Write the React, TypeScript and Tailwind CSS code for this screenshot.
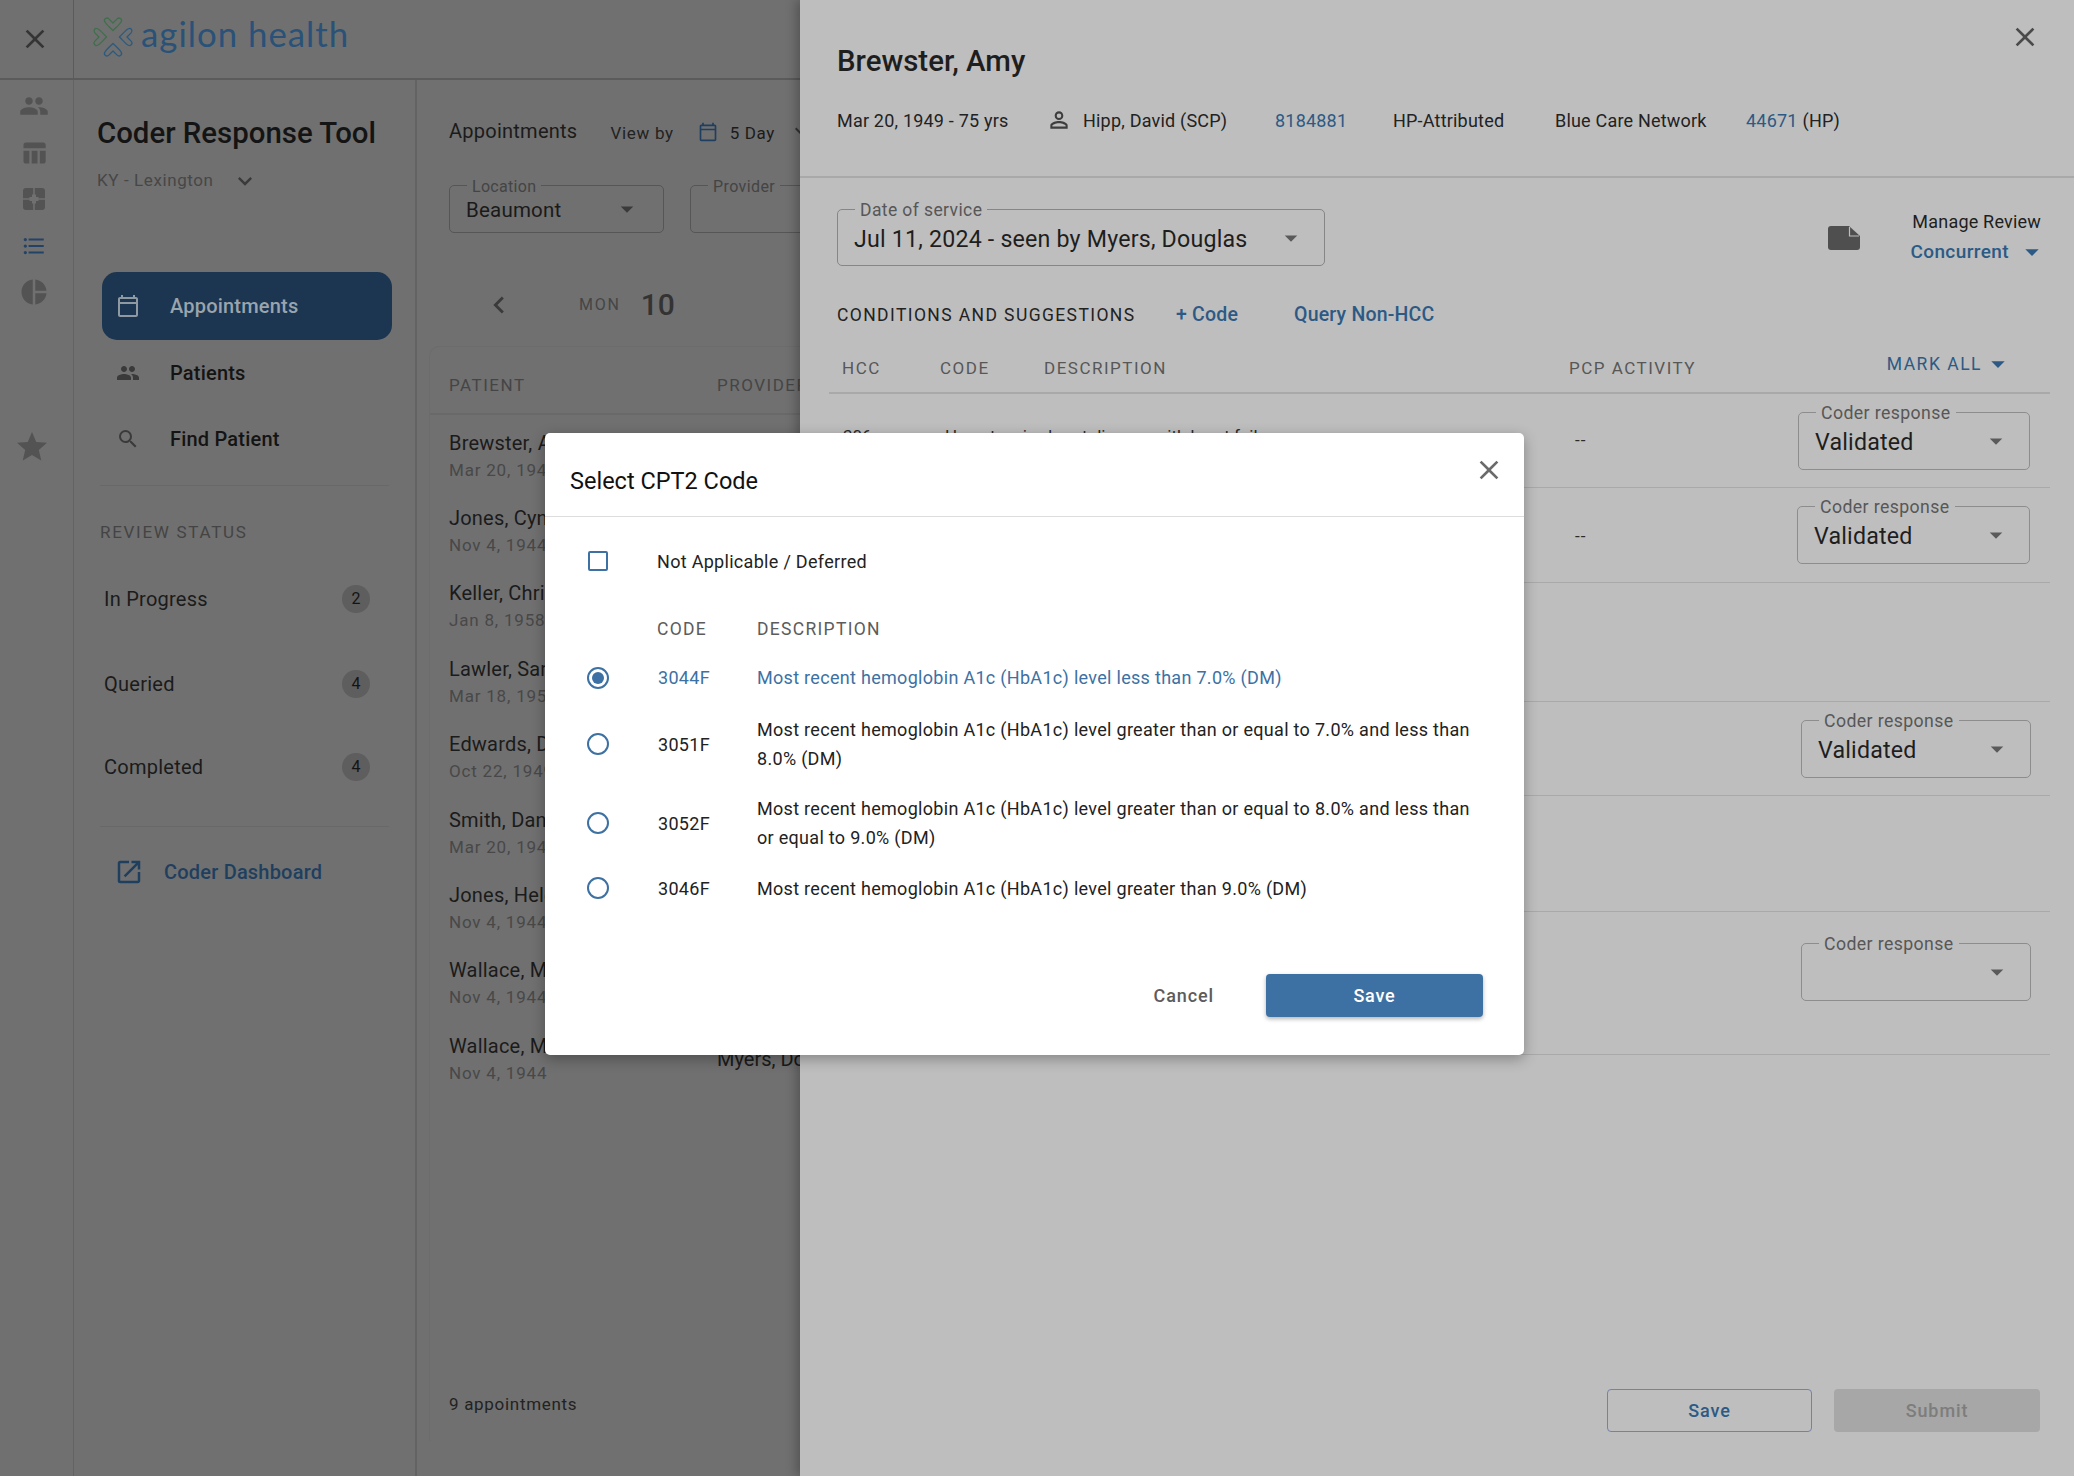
import React from "react";
import {
  MdPeople, MdTableChart, MdFormatListBulleted, MdPieChart, MdStar, MdClose, MdKeyboardArrowDown,
  MdOutlineCalendarToday, MdSearch, MdOpenInNew, MdPersonOutline, MdArrowDropDown, MdChevronLeft,
} from "react-icons/md";

const patients = [
  ["Brewster, Amy", "Mar 20, 1949"],
  ["Jones, Cynthia", "Nov 4, 1944"],
  ["Keller, Christine", "Jan 8, 1958"],
  ["Lawler, Sarah", "Mar 18, 1955"],
  ["Edwards, Donald", "Oct 22, 1949"],
  ["Smith, Daniel", "Mar 20, 1949"],
  ["Jones, Helen", "Nov 4, 1944"],
  ["Wallace, Mary", "Nov 4, 1944"],
  ["Wallace, Mark", "Nov 4, 1944"],
];

function Logo() {
  const heart = "M0 -3 L-6 -9 C-9 -12 -14 -9 -12 -5 C-11 -2 -6 2 0 8 C6 2 11 -2 12 -5 C14 -9 9 -12 6 -9 Z";
  return (
    <svg width="42" height="42" viewBox="-22 -22 44 44" fill="none" strokeWidth="1.900" strokeLinejoin="round">
      <path d={heart} transform="translate(0 -12.500) scale(.72)" stroke="#3f6f4c" />
      <path d={heart} transform="translate(-12.500 0) rotate(-90) scale(.72)" stroke="#3f6f4c" />
      <path d={heart} transform="translate(12.500 0) rotate(90) scale(.72)" stroke="#2c5a7f" />
      <path d={heart} transform="translate(0 12.500) rotate(180) scale(.72)" stroke="#2c5a7f" />
    </svg>
  );
}

function FrameIcon() {
  return (
    <svg width="24" height="24" viewBox="0 0 24 24">
      <rect x="1" y="1" width="22" height="22" rx="3" fill="#535353" />
      <path d="M11.200 1h1.600v22h-1.600zM1 11.200h22v1.600H1z" fill="#707070" />
      <path d="M10 7.500h4v2.500h2.500v4H14v2.500h-4V14H7.500v-4H10z" fill="#707070" />
    </svg>
  );
}

function NoteIcon() {
  return (
    <svg width="32" height="24" viewBox="0 0 32 24" className="mb-[16px] ml-auto shrink-0">
      <path d="M3 0h18l11 10v11a3 3 0 0 1-3 3H3a3 3 0 0 1-3-3V3a3 3 0 0 1 3-3z" fill="#4f4f4f" />
      <path d="M21.500 1v9h9.500" fill="none" stroke="#bebebe" strokeWidth="1.200" />
    </svg>
  );
}

function OutlinedSelect({ label, value, className, labelClass, valueClass, arrow }: { label: string; value?: string; className: string; labelClass: string; valueClass: string; arrow: string }) {
  return (
    <div className={"relative flex items-center justify-between rounded-[5px] border " + className}>
      <span className={"absolute -top-[9px] left-[17px] px-[5px] leading-[18px] " + labelClass}>{label}</span>
      <span className={valueClass}>{value}</span>
      <MdArrowDropDown size={30} className={arrow} />
    </div>
  );
}

function Dimmed() {
  return (
    <div className="flex h-[1476px] flex-col bg-[#707070]">
      <header className="flex h-[80px] shrink-0 border-b-2 border-[#5b5b5b]">
        <div className="flex w-[74px] items-center justify-center border-r border-[#5b5b5b] pr-[4px] text-[#353535]">
          <MdClose size={32} />
        </div>
        <div className="flex items-center gap-[7px] pl-[18px] pb-[4px]">
          <Logo />
          <span className="mb-[6px] text-[34.800px] leading-[40px] text-[#2a5278] font-['Lato',sans-serif] tracking-[1px]">agilon health</span>
        </div>
      </header>
      <div className="flex min-h-0 flex-1">
        <nav className="flex w-[74px] shrink-0 flex-col items-center border-r border-[#636363] pr-[6px] pt-[3px] text-[#535353]">
          <div className="flex h-[46.500px] items-center"><MdPeople size={30} /></div>
          <div className="flex h-[46.500px] items-center"><MdTableChart size={28} /></div>
          <div className="flex h-[46.500px] items-center"><FrameIcon /></div>
          <div className="flex h-[46.500px] items-center text-[#234366]"><MdFormatListBulleted size={26} /></div>
          <div className="flex h-[46.500px] items-center"><MdPieChart size={30} /></div>
          <div className="mr-[3px] mt-[108px] flex h-[47px] items-center"><MdStar size={36} /></div>
        </nav>

        <aside className="flex w-[343px] shrink-0 flex-col border-r-2 border-[#636363] pl-[23px] pr-[26px]">
          <h1 className="mt-[32px] whitespace-nowrap text-[29.400px] leading-[42px] font-medium text-[#141414]">Coder Response Tool</h1>
          <div className="mt-[12px] flex h-[30px] items-center text-[17px] tracking-[0.6px] text-[#474747]">
            KY - Lexington
            <MdKeyboardArrowDown size={28} className="ml-[17px] text-[#3a3a3a]" />
          </div>
          <div className="-mr-[3px] mt-[76px] ml-[5px] flex h-[68px] items-center rounded-[15px] bg-[#1c3550] pl-[14px] text-[20px] font-medium tracking-[0.2px] text-[#9aa4ad]">
            <MdOutlineCalendarToday size={24} className="mr-[30px] text-[#8f99a2]" />
            Appointments
          </div>
          <div className="ml-[5px] flex h-[66px] items-center pl-[14px] text-[20px] font-medium tracking-[0.2px] text-[#141414]">
            <MdPeople size={24} className="mr-[30px] text-[#3a3a3a]" />
            Patients
          </div>
          <div className="ml-[5px] flex h-[66px] items-center pl-[14px] text-[20px] font-medium tracking-[0.2px] text-[#141414]">
            <MdSearch size={24} className="mr-[30px] text-[#3a3a3a]" />
            Find Patient
          </div>
          <div className="mt-[13px] h-px bg-[#686868] ml-[3px]" />
          <div className="mt-[36px] ml-[3px] text-[17px] leading-[20px] tracking-[1.700px] text-[#444444]">REVIEW STATUS</div>
          {[["In Progress", "2", "mt-[35px]"], ["Queried", "4", "mt-[41px]"], ["Completed", "4", "mt-[39px]"]].map(([t, n, m]) => (
            <div key={t} className={"ml-[7px] flex h-[44px] items-center justify-between pr-[19px] text-[20px] text-[#1b1b1b] tracking-[0.25px] " + m}>
              {t}
              <span className="flex h-[28px] w-[28px] items-center justify-center rounded-full bg-[#5e5e5e] text-[16px] text-[#141414]">{n}</span>
            </div>
          ))}
          <div className="mt-[37px] h-px bg-[#686868] ml-[3px]" />
          <div className="mt-[23px] ml-[17px] flex h-[44px] items-center text-[20px] font-medium text-[#1f3f5f] tracking-[0.2px]">
            <MdOpenInNew size={30} className="mr-[20px] text-[#1f3f5f]" />
            Coder Dashboard
          </div>
        </aside>

        <main className="min-w-0 flex-1 overflow-hidden pl-[32px]">
          <div className="mt-[31px] flex h-[40px] items-center whitespace-nowrap text-[#1b1b1b]">
            <span className="text-[20px] tracking-[0.25px]">Appointments</span>
            <span className="ml-[33px] mt-[5px] text-[17px] tracking-[0.7px] text-[#222222]">View by</span>
            <MdOutlineCalendarToday size={20} className="ml-[24px] mt-[2px] text-[#1e3f60]" />
            <span className="ml-[12px] mt-[5px] text-[17px] tracking-[0.6px]">5 Day</span>
            <MdKeyboardArrowDown size={24} className="ml-[14px] text-[#333333]" />
          </div>
          <div className="mt-[34px] flex w-[500px] gap-[26px]">
            <OutlinedSelect label="Location" value="Beaumont" className="h-[48px] w-[215px] shrink-0 border-[#565656] pl-[16px] pr-[21px]" labelClass="mt-[1px] bg-[#707070] text-[#444444] text-[16px] tracking-[0.3px]" valueClass="pt-[2px] text-[20.500px] text-[#1a1a1a] tracking-[0.2px]" arrow="text-[#3a3a3a]" />
            <OutlinedSelect label="Provider" className="h-[48px] w-[215px] shrink-0 border-[#565656] pl-[16px] pr-[21px]" labelClass="mt-[1px] bg-[#707070] text-[#444444] text-[16px] tracking-[0.4px]" valueClass="" arrow="text-[#3a3a3a]" />
          </div>
          <div className="mt-[50px] flex h-[44px] items-center">
            <MdChevronLeft size={34} className="ml-[33px] text-[#3a3a3a]" />
            <span className="ml-[63px] text-[16px] tracking-[1.800px] text-[#454545]">MON</span>
            <span className="ml-[20px] -mt-[1px] text-[30px] font-medium text-[#333333]">10</span>
          </div>
          <div className="-ml-[20px] mt-[19px] h-[1095px] w-[500px] rounded-t-[10px] border-t border-l border-[#6c6c6c]">
            <div className="flex h-[68px] items-center border-b-2 border-[#696969] pl-[19px] pt-[11px] text-[17px] tracking-[1.500px] text-[#454545]">
              <span className="w-[268px] shrink-0">PATIENT</span>
              <span>PROVIDER</span>
            </div>
            <div className="mt-[3px]">
              {patients.map(([n, d]) => (
                <div key={n} className="flex h-[75.400px] items-center pl-[19px]">
                  <div className="w-[268px] shrink-0 pt-[1px]">
                    <div className="whitespace-nowrap text-[20px] leading-[28px] text-[#1b1b1b] tracking-[0.2px]">{n}</div>
                    <div className="whitespace-nowrap text-[17px] leading-[27px] text-[#484848] tracking-[0.8px]">{d}</div>
                  </div>
                  <div className="whitespace-nowrap text-[20px] text-[#1b1b1b]">Myers, Douglas</div>
                </div>
              ))}
            </div>
            <div className="mt-[295px] pl-[19px] text-[17px] leading-[24px] tracking-[0.7px] text-[#222222]">9 appointments</div>
          </div>
        </main>
      </div>
    </div>
  );
}

function CoderRow({ h, code, text, dash, dashClass, value, sel, selClass }: { h: string; code?: string; text?: string; dash?: string; dashClass?: string; value?: string; sel?: boolean; selClass?: string }) {
  return (
    <div className={"flex items-center border-b border-[#a9a9a9] text-[17px] text-[#2b2b2b] " + h}>
      <span className="ml-[14px] w-[102px] shrink-0 -translate-y-[4px]">{code}</span>
      <span className="w-[630px] shrink-0 -translate-y-[4px] whitespace-nowrap">{text}</span>
      <span className={"w-[40px] shrink-0 tracking-[1px] " + (dashClass ?? "")}>{dash}</span>
      {sel && (
        <OutlinedSelect label="Coder response" value={value} className={"ml-auto h-[58px] border-[#8d8d8d] pl-[16px] pr-[18px] " + selClass} labelClass="bg-[#bebebe] text-[#575757] text-[17.700px] tracking-[0.4px]" valueClass="pt-[3px] text-[23.200px] text-[#1e1e1e] tracking-[0.2px]" arrow="text-[#5a5a5a]" />
      )}
    </div>
  );
}

function Drawer() {
  const link = "text-[#2c5a85]";
  return (
    <section className="absolute inset-y-0 left-[800px] right-0 flex flex-col bg-[#bebebe] shadow-[-4px_0_10px_rgba(0,0,0,0.25)]">
      <div className="relative h-[178px] shrink-0 border-b-2 border-[#a9a9a9] pl-[37px]">
        <h2 className="pt-[42px] text-[29.400px] leading-[38px] font-medium text-[#1e1e1e]">Brewster, Amy</h2>
        <MdClose size={32} className="absolute right-[33px] top-[21px] text-[#4a4a4a]" />
        <div className="mt-[20px] flex h-[40px] items-center whitespace-nowrap text-[18px] tracking-[0.2px] text-[#222222]">
          <span className="w-[204px] shrink-0">Mar 20, 1949 - 75 yrs</span>
          <MdPersonOutline size={26} className="ml-[5px] mr-[11px] shrink-0 text-[#3e3e3e]" />
          <span className="w-[192px] shrink-0">Hipp, David (SCP)</span>
          <span className={"w-[118px] shrink-0 " + link}>8184881</span>
          <span className="w-[162px] shrink-0">HP-Attributed</span>
          <span className="w-[191px] shrink-0">Blue Care Network</span>
          <span className={link}>44671</span>
          <span className="ml-[5px]">(HP)</span>
        </div>
      </div>

      <div className="flex h-[88px] shrink-0 items-end pl-[37px] pr-[27px]">
        <OutlinedSelect label="Date of service" value="Jul 11, 2024 - seen by Myers, Douglas" className="h-[57px] w-[488px] border-[#868686] pl-[16px] pr-[18px]" labelClass="bg-[#bebebe] text-[#575757] text-[17.500px] tracking-[0.4px]" valueClass="pt-[3px] text-[23.200px] text-[#1e1e1e] tracking-[0.2px] whitespace-nowrap" arrow="text-[#5a5a5a]" />
        <NoteIcon />
        <div className="-mb-[2px] ml-[50px] flex flex-col items-end">
          <span className="mr-[6px] whitespace-nowrap text-[18px] leading-[24px] tracking-[0.2px] text-[#1e1e1e]">Manage Review</span>
          <span className="mt-[2px] flex items-center whitespace-nowrap text-[19px] font-medium leading-[30px] tracking-[0.4px] text-[#2c5a85]">Concurrent<MdArrowDropDown size={32} className="ml-[7px] -mr-[1px]" /></span>
        </div>
      </div>

      <div className="mt-[34px] flex h-[30px] shrink-0 items-center whitespace-nowrap pl-[37px]">
        <span className="w-[339px] text-[17.500px] tracking-[1.400px] text-[#222222]">CONDITIONS AND SUGGESTIONS</span>
        <span className="w-[118px] text-[19.500px] font-medium tracking-[0.2px] text-[#2c5a85]">+ Code</span>
        <span className="text-[19.500px] font-medium tracking-[0.2px] text-[#2c5a85]">Query Non-HCC</span>
      </div>

      <div className="relative ml-[29px] mr-[24px] mt-[27px] flex h-[37px] shrink-0 items-center border-b-2 border-[#a9a9a9] pb-[11px] text-[17px] tracking-[1.500px] text-[#575757]">
        <span className="ml-[13px] w-[98px]">HCC</span>
        <span className="w-[104px]">CODE</span>
        <span className="w-[525px]">DESCRIPTION</span>
        <span>PCP ACTIVITY</span>
        <span className="absolute -top-[9px] right-[36px] flex items-center text-[17.500px] tracking-[1.500px] text-[#2c5a85]">MARK ALL<MdArrowDropDown size={32} /></span>
      </div>

      <div className="ml-[29px] mr-[24px] shrink-0">
        <CoderRow h="h-[94px] pr-[20px]" code="306" text="Hypertensive heart disease with heart failure" dash="--" value="Validated" sel selClass="w-[232px]" />
        <CoderRow h="h-[95px] pr-[20px]" dash="--" dashClass="translate-y-[2px]" value="Validated" sel selClass="w-[233px]" />
        <CoderRow h="h-[119px]" />
        <CoderRow h="h-[94px] pr-[19px]" value="Validated" sel selClass="w-[230px]" />
        <CoderRow h="h-[116px]" />
        <CoderRow h="h-[143px] pr-[19px] pb-[22px]" value="" sel selClass="w-[230px]" />
      </div>

      <div className="mt-auto mb-[44px] flex justify-end gap-[22px] pr-[34px]">
        <button className="flex h-[43px] w-[205px] items-center justify-center rounded-[4px] border border-[#7282a8] text-[18px] font-medium tracking-[0.9px] text-[#2c5a85]">Save</button>
        <button className="flex h-[43px] w-[206px] items-center justify-center rounded-[4px] bg-[#a7a7a7] text-[18px] font-medium tracking-[0.9px] text-[#7d7d7d]">Submit</button>
      </div>
    </section>
  );
}

function Modal() {
  const rows = [
    ["3044F", "Most recent hemoglobin A1c (HbA1c) level less than 7.0% (DM)", true, "h-[59px]"],
    ["3051F", "Most recent hemoglobin A1c (HbA1c) level greater than or equal to 7.0% and less than 8.0% (DM)", false, "h-[74px]"],
    ["3052F", "Most recent hemoglobin A1c (HbA1c) level greater than or equal to 8.0% and less than or equal to 9.0% (DM)", false, "h-[84px]"],
    ["3046F", "Most recent hemoglobin A1c (HbA1c) level greater than 9.0% (DM)", false, "h-[46px]"],
  ] as const;
  return (
    <div className="absolute left-[545px] top-[433px] flex h-[622px] w-[979px] flex-col rounded-[5px] bg-white shadow-[0_4px_14px_rgba(0,0,0,0.3)]">
      <div className="relative flex h-[84px] shrink-0 items-center border-b border-[#dddddd] pl-[25px] pt-[15px] text-[23.500px] text-[#111111]">
        Select CPT2 Code
        <MdClose size={32} className="absolute right-[19px] top-[21px] text-[#6b6b6b]" />
      </div>
      <div className="mt-[27px] flex h-[34px] items-center pl-[43px] text-[18px] tracking-[0.3px] text-[#222222]">
        <span className="h-[20px] w-[20px] rounded-[2px] border-2 border-[#3d71a3]" />
        <span className="ml-[49px]">Not Applicable / Deferred</span>
      </div>
      <div className="mt-[39px] flex h-[24px] items-center pl-[112px] text-[17.500px] tracking-[1.300px] text-[#5c5c5c]">
        <span className="w-[100px]">CODE</span>
        <span>DESCRIPTION</span>
      </div>
      <div className="mt-[7px]">
        {rows.map(([c, d, sel, h]) => (
          <div key={c} className={"flex items-center pl-[42px] text-[18px] leading-[29px] tracking-[0.3px] " + h + " " + (sel ? "text-[#3d71a3]" : "text-[#222222]")}>
            <span className="flex h-[22px] w-[22px] shrink-0 items-center justify-center rounded-full border-2 border-[#3d71a3]">
              {sel && <span className="h-[12px] w-[12px] rounded-full bg-[#3d71a3]" />}
            </span>
            <span className="ml-[49px] w-[99px] shrink-0">{c}</span>
            <span className="w-[725px]">{d}</span>
          </div>
        ))}
      </div>
      <div className="mt-auto mb-[38px] flex items-center justify-end pr-[41px]">
        <span className="mr-[52px] -mt-[1px] text-[18px] font-medium tracking-[0.9px] text-[#5c5c5c]">Cancel</span>
        <button className="flex h-[43px] w-[217px] items-center justify-center rounded-[4px] bg-[#3d71a3] text-[18px] font-medium tracking-[0.8px] text-white shadow-[0_2px_4px_rgba(0,0,0,0.3)]">Save</button>
      </div>
    </div>
  );
}

export default function App() {
  return (
    <div className="relative h-[1476px] w-[2074px] overflow-hidden font-['Roboto',sans-serif]">
      <Dimmed />
      <Drawer />
      <Modal />
    </div>
  );
}
